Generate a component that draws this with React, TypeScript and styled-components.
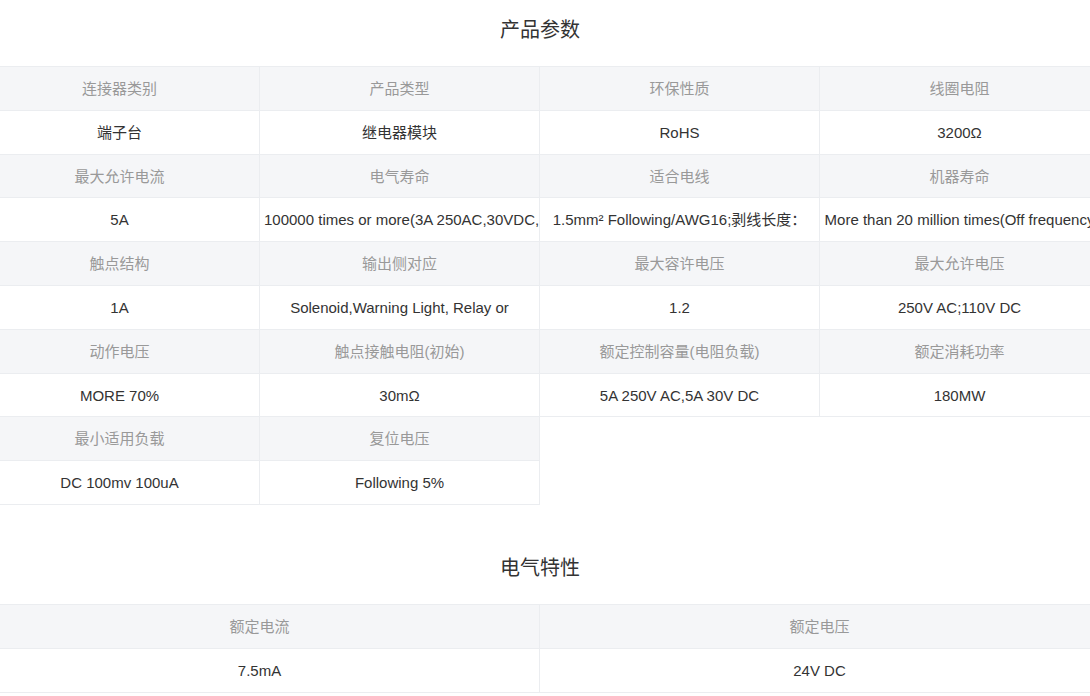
import React from 'react';
import styled, { createGlobalStyle } from 'styled-components';

const GlobalStyle = createGlobalStyle`
  html, body {
    margin: 0;
    padding: 0;
    background: #fff;
    overflow: hidden;
  }
  body {
    font-family: "Liberation Sans", Arial, "Noto Sans CJK SC", sans-serif;
    color: #333;
  }
`;

type Param = { label: string; value: string };

const productParams: Param[] = [
  { label: '连接器类别', value: '端子台' },
  { label: '产品类型', value: '继电器模块' },
  { label: '环保性质', value: 'RoHS' },
  { label: '线圈电阻', value: '3200Ω' },
  { label: '最大允许电流', value: '5A' },
  { label: '电气寿命', value: '100000 times or more(3A 250AC,30VDC,' },
  { label: '适合电线', value: '1.5mm² Following/AWG16;剥线长度：' },
  { label: '机器寿命', value: 'More than 20 million times(Off frequency' },
  { label: '触点结构', value: '1A' },
  { label: '输出侧对应', value: 'Solenoid,Warning Light, Relay or' },
  { label: '最大容许电压', value: '1.2' },
  { label: '最大允许电压', value: '250V AC;110V DC' },
  { label: '动作电压', value: 'MORE 70%' },
  { label: '触点接触电阻(初始)', value: '30mΩ' },
  { label: '额定控制容量(电阻负载)', value: '5A 250V AC,5A 30V DC' },
  { label: '额定消耗功率', value: '180MW' },
  { label: '最小适用负载', value: 'DC 100mv 100uA' },
  { label: '复位电压', value: 'Following 5%' },
];

const electricParams: Param[] = [
  { label: '额定电流', value: '7.5mA' },
  { label: '额定电压', value: '24V DC' },
];

const chunk = (items: Param[], size: number) => {
  const rows: Param[][] = [];
  for (let i = 0; i < items.length; i += size) rows.push(items.slice(i, i + size));
  return rows;
};

interface SpecTableProps {
  title: string;
  params: Param[];
  columns: number;
}

const SpecTable: React.FC<SpecTableProps> = ({ title, params, columns }) => {
  const rows = chunk(params, columns);
  return (
    <StyledSection>
      <StyledTitle>{title}</StyledTitle>
      <StyledGrid $columns={columns}>
        {rows.map((row, i) => (
          <React.Fragment key={i}>
            {row.map((p) => (
              <StyledLabelCell key={`l-${p.label}`}>{p.label}</StyledLabelCell>
            ))}
            {row.length < columns && <StyledFiller $span={columns - row.length} />}
            {row.map((p) => (
              <StyledValueCell key={`v-${p.label}`}>{p.value}</StyledValueCell>
            ))}
            {row.length < columns && <StyledFiller $span={columns - row.length} />}
          </React.Fragment>
        ))}
      </StyledGrid>
    </StyledSection>
  );
};

const App: React.FC = () => {
  return (
    <>
      <GlobalStyle />
      <StyledPage>
        <SpecTable title="产品参数" params={productParams} columns={4} />
        <SpecTable title="电气特性" params={electricParams} columns={2} />
      </StyledPage>
    </>
  );
};

const StyledPage = styled.div`
  width: 1120px;
  margin-left: -20px;
  display: flex;
  flex-direction: column;
  gap: 33px;
`;

const StyledSection = styled.section`
  display: flex;
  flex-direction: column;
`;

const StyledTitle = styled.h2`
  margin: 0 0 6px;
  height: 60px;
  line-height: 60px;
  text-align: center;
  font-size: 20px;
  font-weight: 400;
  color: #333;
`;

const StyledGrid = styled.div<{ $columns: number }>`
  display: grid;
  grid-template-columns: repeat(${(p) => p.$columns}, 1fr);
  grid-auto-rows: 43.8px;
  border-top: 1px solid #ebedf0;
`;

const StyledCell = styled.div`
  box-sizing: border-box;
  padding: 1px 4px 0;
  line-height: 42.8px;
  text-align: center;
  font-size: 15px;
  white-space: nowrap;
  overflow: hidden;
  border-right: 1px solid #ebedf0;
  border-bottom: 1px solid #ebedf0;
`;

const StyledLabelCell = styled(StyledCell)`
  background: #f5f6f8;
  color: #999;
`;

const StyledValueCell = styled(StyledCell)`
  background: #fff;
  color: #333;
`;

const StyledFiller = styled.div<{ $span: number }>`
  grid-column: span ${(p) => p.$span};
`;

export default App;
